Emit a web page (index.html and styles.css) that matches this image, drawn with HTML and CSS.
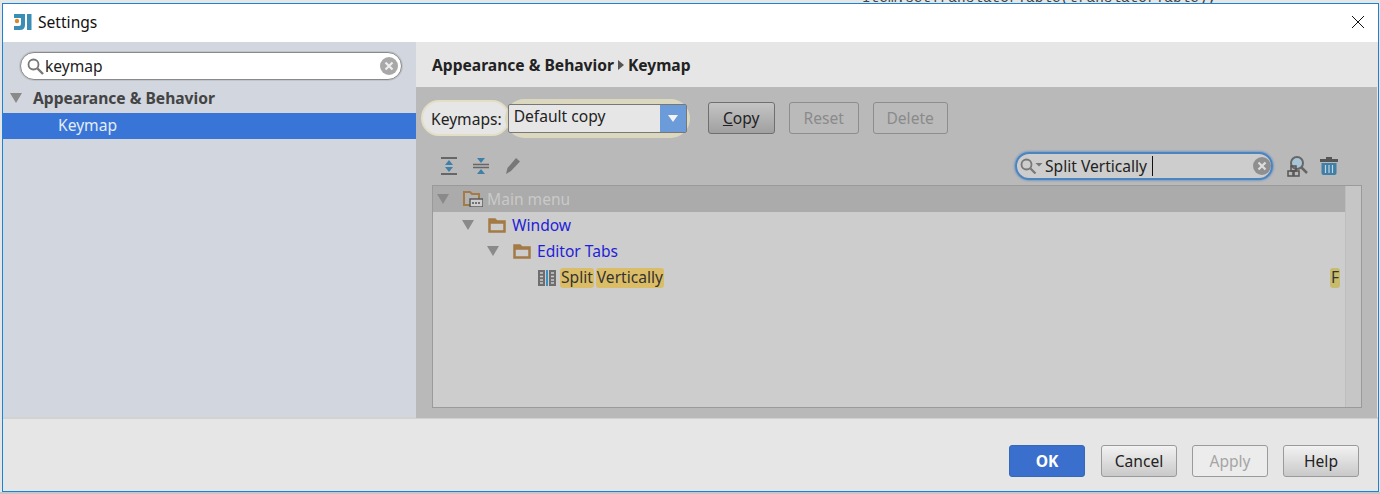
FILE: index.html
```html
<!DOCTYPE html>
<html lang="en">
<head>
    <meta charset="UTF-8">
    <meta name="viewport" content="width=device-width, initial-scale=1.0">
    <title>Settings</title>
    <link rel="stylesheet" href="styles.css">
</head>
<body>
    <div class="behind"><div class="behind-text">Item.setTranslatorTable(translatorTable);</div></div>
    <div class="window">
        <div class="titlebar">
            <svg class="app-icon" width="20" height="18" viewBox="0 0 20 18">
                <path d="M1 1h11v11q0 5-5 5H1v-4h5q2 0 2-2V5H1z" fill="#3a8db5"/>
                <circle cx="4" cy="8" r="2.2" fill="#d98a2b"/>
                <rect x="14" y="1" width="4.5" height="16" fill="#3a8db5"/>
            </svg>
            <span class="title">Settings</span>
            <svg class="close" width="12" height="12" viewBox="0 0 12 12">
                <path d="M0 0L12 12M12 0L0 12" stroke="#111" stroke-width="1"/>
            </svg>
        </div>

        <div class="main">
            <div class="sidebar">
                <div class="side-search">
                    <svg width="17" height="17" viewBox="0 0 17 17">
                        <circle cx="6.5" cy="6.500" r="5" fill="none" stroke="#777" stroke-width="1.8"/>
                        <path d="M10.500 10.500l5.500 5.500" stroke="#777" stroke-width="2.4"/>
                    </svg>
                    <span class="side-search-text">keymap</span>
                    <svg class="clear" width="18" height="18" viewBox="0 0 18 18">
                        <circle cx="9" cy="9" r="9" fill="#a8a8a8"/>
                        <path d="M5.5 5.5l7 7M12.5 5.5l-7 7" stroke="#eee" stroke-width="2.2"/>
                    </svg>
                </div>
                <div class="side-group">
                    <span class="tri"></span>
                    <span>Appearance &amp; Behavior</span>
                </div>
                <div class="side-item">Keymap</div>
            </div>

            <div class="content">
                <div class="breadcrumb">
                    <span>Appearance &amp; Behavior</span>
                    <span class="crumb-arrow"></span>
                    <span>Keymap</span>
                </div>

                <div class="panel">
                    <div class="keymap-row">
                        <span class="keymaps-label">Keymaps:</span>
                        <div class="combo-halo">
                            <div class="combo">
                                <span class="combo-text">Default copy</span>
                                <span class="combo-btn"><span class="combo-arrow"></span></span>
                            </div>
                        </div>
                        <button class="btn copy"><u>C</u>opy</button>
                        <button class="btn off reset">Reset</button>
                        <button class="btn off delete">Delete</button>
                    </div>

                    <div class="tool-row">
                        <svg class="tool" width="16" height="18" viewBox="0 0 16 18">
                            <path d="M0 1h16M0 17h16" stroke="#666" stroke-width="2"/>
                            <path d="M8 3l4 5H4z M8 15l4-5H4z" fill="#3f7fa8"/>
                        </svg>
                        <svg class="tool" width="16" height="18" viewBox="0 0 16 18">
                            <path d="M0 7.5h16M0 10.5h16" stroke="#666" stroke-width="1.6"/>
                            <path d="M8 6l4-5H4z M8 12l4 5H4z" fill="#3f7fa8"/>
                        </svg>
                        <svg class="tool" width="16" height="18" viewBox="0 0 16 18">
                            <path d="M11 1l4 3.500L6 14l-5 3 1.500-6z" fill="#777"/>
                        </svg>
                        <div class="filter">
                            <svg width="23" height="16" viewBox="0 0 23 16">
                                <circle cx="6.500" cy="6.500" r="5" fill="none" stroke="#777" stroke-width="1.8"/>
                                <path d="M10.500 10.500l5 5" stroke="#777" stroke-width="2.2"/>
                                <path d="M15.500 5h7l-3.500 3.500z" fill="#777"/>
                            </svg>
                            <span class="filter-text">Split Vertically</span>
                            <span class="caret"></span>
                            <svg class="clear" width="18" height="18" viewBox="0 0 18 18">
                                <circle cx="9" cy="9" r="9" fill="#8f8f8f"/>
                                <path d="M5.500 5.500l7 7M12.500 5.500l-7 7" stroke="#ddd" stroke-width="2.2"/>
                            </svg>
                        </div>
                        <svg class="find-shortcut" width="22" height="22" viewBox="0 0 22 22">
                            <circle cx="11" cy="8" r="6" fill="#a9c4d6" stroke="#666" stroke-width="2"/>
                            <path d="M15 12l6 6" stroke="#666" stroke-width="2.500"/>
                            <rect x="2" y="16" width="5" height="5" fill="none" stroke="#555" stroke-width="1.500"/>
                            <rect x="8" y="16" width="5" height="5" fill="none" stroke="#555" stroke-width="1.500"/>
                            <rect x="5" y="11" width="5" height="5" fill="none" stroke="#555" stroke-width="1.500"/>
                        </svg>
                        <svg class="trash" width="18" height="20" viewBox="0 0 18 20">
                            <path d="M6 2h6" stroke="#555" stroke-width="2"/>
                            <rect x="0" y="3" width="18" height="3" fill="#555"/>
                            <path d="M1.500 7h15v10q0 2-2 2h-11q-2 0-2-2z" fill="#3f7fa8"/>
                            <path d="M5.500 9v8M9 9v8M12.500 9v8" stroke="#c4d4de" stroke-width="1.200"/>
                        </svg>
                    </div>

                    <div class="tree">
                        <div class="tree-body">
                            <div class="node selected">
                                <span class="tri"></span>
                                <svg class="folder" width="20" height="16" viewBox="0 0 20 16">
                                    <path d="M1 1h6l2 2h7v11H1z" fill="#b3b3b3" stroke="#a47a45" stroke-width="2"/>
                                    <rect x="7" y="8" width="13" height="8" fill="#cfcfcf" stroke="#555" stroke-width="1.400"/>
                                    <path d="M9 12h9" stroke="#555" stroke-width="1.500" stroke-dasharray="2 1"/>
                                </svg>
                                <span class="muted-name">Main menu</span>
                            </div>
                            <div class="node depth1">
                                <span class="tri"></span>
                                <svg class="folder" width="18" height="15" viewBox="0 0 18 15">
                                    <path d="M1 1h6l2 2h8v11H1z M2 5v8h14V5z" fill="#a47a45" stroke="#a47a45" stroke-width="1.500"/>
                                </svg>
                                <span class="link-name">Window</span>
                            </div>
                            <div class="node depth2">
                                <span class="tri"></span>
                                <svg class="folder" width="18" height="15" viewBox="0 0 18 15">
                                    <path d="M1 1h6l2 2h8v11H1z M2 5v8h14V5z" fill="#a47a45" stroke="#a47a45" stroke-width="1.500"/>
                                </svg>
                                <span class="link-name">Editor Tabs</span>
                            </div>
                            <div class="node depth3">
                                <svg class="split-icon" width="18" height="16" viewBox="0 0 18 16">
                                    <rect x="0" y="0" width="7" height="16" fill="#6e6e6e"/>
                                    <rect x="11" y="0" width="7" height="16" fill="#6e6e6e"/>
                                    <rect x="8" y="0" width="2" height="16" fill="#3f8fc0"/>
                                    <path d="M2 3h3M2 6.500h3M2 10h3M2 13h3M13 3h3M13 6.500h3M13 10h3M13 13h3" stroke="#ccc" stroke-width="1.500"/>
                                </svg>
                                <span class="hit">Split</span>
                                <span class="hit">Vertically</span>
                                <span class="hit shortcut">F</span>
                            </div>
                        </div>
                        <div class="tree-scroll"></div>
                    </div>
                </div>
            </div>
        </div>

        <div class="footer">
            <button class="btn foot ok">OK</button>
            <button class="btn foot">Cancel</button>
            <button class="btn foot foot-off">Apply</button>
            <button class="btn foot">Help</button>
        </div>
    </div>
    <div class="behind-bottom"></div>
</body>
</html>
```

FILE: styles.css
```css
* {
    box-sizing: border-box;
}
html, body {
    margin: 0;
    height: 100%;
    overflow: hidden;
}
body {
    font-family: "Noto Sans", Arial, sans-serif;
    font-size: 15.6px;
    color: #222;
    background-color: #e6e6e6;
    padding: 0 1px 0 2px;
}
.behind {
    height: 3px;
    overflow: hidden;
    padding-left: 860px;
}
.behind-text {
    margin-top: -7px;
    font-family: "Liberation Mono", monospace;
    font-size: 14.4px;
    line-height: 10px;
    color: #444;
}
.behind-bottom {
    height: 2px;
    margin: 0 -1px 0 -2px;
    background-color: #c6c6c6;
}
.window {
    height: 489px;
    display: flex;
    flex-direction: column;
    border: 1px solid #1883d7;
    background-color: #e6e6e6;
}

/* title bar */
.titlebar {
    height: 38px;
    flex: none;
    display: flex;
    align-items: center;
    padding: 0 14px 2px 10px;
    background-color: #fff;
}
.app-icon {
    margin-right: 5px;
}
.title {
    color: #111;
    flex: 1;
}

.main {
    height: 377px;
    flex: none;
    display: flex;
    border-bottom: 2px solid #d2d2d2;
}

/* left side */
.sidebar {
    width: 413px;
    flex: none;
    background-color: #d1d6df;
    padding-top: 10px;
}
.side-search {
    height: 28px;
    margin: 0 14px 0 17px;
    display: flex;
    align-items: center;
    padding: 0 3px 0 6px;
    background-color: #fff;
    border: 1px solid #8a8a8a;
    border-radius: 14px;
    box-shadow: 0 0 0 1px #bfc3ca;
}
.side-search-text {
    flex: 1;
    margin-left: 1px;
}
.side-group {
    height: 33px;
    display: flex;
    align-items: center;
    padding: 3px 0 0 7px;
    font-weight: 700;
    color: #444;
}
.side-group .tri {
    margin-right: 11px;
}
.side-item {
    height: 26px;
    line-height: 25px;
    padding-left: 55px;
    color: #e4ecf8;
    background-color: #3875d7;
}
.tri {
    display: inline-block;
    width: 0;
    height: 0;
    border-left: 6px solid transparent;
    border-right: 6px solid transparent;
    border-top: 10px solid #8a8a8a;
}

/* right side */
.content {
    flex: 1;
    display: flex;
    flex-direction: column;
}
.breadcrumb {
    height: 45px;
    flex: none;
    display: flex;
    align-items: center;
    gap: 4px;
    padding-left: 16px;
    font-weight: 700;
    color: #222;
}
.crumb-arrow {
    width: 0;
    height: 0;
    border-top: 5px solid transparent;
    border-bottom: 5px solid transparent;
    border-left: 6px solid #555;
}
.panel {
    flex: 1;
    margin-right: 1px;
    background-color: #b9b9b9;
    padding: 11px 15px 10px 16px;
}
.keymap-row {
    display: flex;
    align-items: center;
    height: 40px;
    margin-left: -11px;
}
.keymaps-label {
    height: 36px;
    line-height: 35px;
    padding: 0 6px 0 8px;
    background-color: #e6e6e6;
    border: 2px solid #e4dfc4;
    border-radius: 18px;
    color: #222;
}
.combo-halo {
    margin-left: -5px;
    padding: 5px 3px;
    background-color: #dcd8c0;
    border-radius: 20px;
}
.combo {
    width: 179px;
    height: 29px;
    display: flex;
    background-color: #e6e6e6;
    border: 1px solid #777;
    border-radius: 2px;
}
.combo-text {
    flex: 1;
    padding-left: 5px;
    line-height: 23px;
}
.combo-btn {
    width: 26px;
    display: flex;
    align-items: center;
    justify-content: center;
    background-color: #6b9bd8;
}
.combo-arrow {
    width: 0;
    height: 0;
    border-left: 5px solid transparent;
    border-right: 5px solid transparent;
    border-top: 7px solid #f4f4f4;
}
.btn {
    font-family: "Noto Sans", Arial, sans-serif;
    font-size: 15.6px;
    padding: 0;
    border-radius: 3px;
    cursor: pointer;
}
.copy, .off {
    height: 32px;
    border: 1px solid #6f6f6f;
    color: #222;
    background: linear-gradient(#c4c4c4, #a0a0a0);
}
.copy {
    width: 67px;
    margin-left: 18px;
}
.off {
    margin-left: 14px;
    border-color: #8d8d8d;
    color: #8a8a8a;
    background: #bababa;
}
.reset {
    width: 70px;
}
.delete {
    width: 75px;
}
.tool-row {
    height: 47px;
    display: flex;
    align-items: center;
    padding: 9px 0 0 9px;
    gap: 16px;
}
.filter {
    width: 258px;
    height: 28px;
    margin-left: auto;
    display: flex;
    align-items: center;
    padding: 0 0 0 3px;
    background-color: #cdcdcd;
    border: 2px solid #4c84c0;
    border-radius: 14px;
    box-shadow: 0 0 2px 1px #7b9cc2;
}
.filter-text {
    margin-left: 2px;
}
.caret {
    width: 1px;
    height: 20px;
    margin-left: 5px;
    background-color: #111;
}
.filter .clear {
    margin-left: auto;
}
.find-shortcut {
    margin-left: -3px;
}
.trash {
    margin-left: -4px;
    margin-right: 24px;
}

/* keymap tree */
.tree {
    height: 223px;
    display: flex;
    background-color: #cdcdcd;
    border: 1px solid #9a9a9a;
}
.tree-body {
    flex: 1;
    min-width: 0;
}
.tree-scroll {
    width: 16px;
    flex: none;
    background-color: #c6c6c6;
    border-left: 1px solid #bdbdbd;
}
.node {
    height: 26px;
    display: flex;
    align-items: center;
    padding-left: 4px;
}
.node .tri {
    margin-right: 14px;
}
.node .folder {
    margin-right: 6px;
}
.selected {
    background-color: #ababab;
}
.selected .folder {
    margin-right: 4px;
}
.muted-name {
    color: #c9c9c9;
}
.link-name {
    color: #1f1fd8;
}
.depth1 {
    padding-left: 29px;
}
.depth2 {
    padding-left: 54px;
}
.depth3 {
    padding: 2px 5px 0 105px;
    gap: 2px;
}
.split-icon {
    margin-right: 2px;
}
.hit {
    height: 20px;
    line-height: 19px;
    padding: 0 1px;
    background-color: #dcbd67;
    border-radius: 3px;
    color: #333;
}
.shortcut {
    margin-left: auto;
    padding: 0 1px;
    background-color: #c8bb6b;
}

/* bottom buttons */
.footer {
    flex: 1;
    display: flex;
    justify-content: flex-end;
    align-items: flex-start;
    padding: 26px 19px 0 0;
    gap: 15px;
}
.foot {
    width: 76px;
    height: 32px;
    border: 1px solid #9a9a9a;
    color: #222;
    background: linear-gradient(#f2f2f2, #c9c9c9);
}
.ok {
    margin-right: 1px;
    border-color: #3568b8;
    color: #fff;
    font-weight: 700;
    background: #3b6fcd;
}
.foot-off {
    color: #a5a5a5;
    background: #ececec;
}
```
